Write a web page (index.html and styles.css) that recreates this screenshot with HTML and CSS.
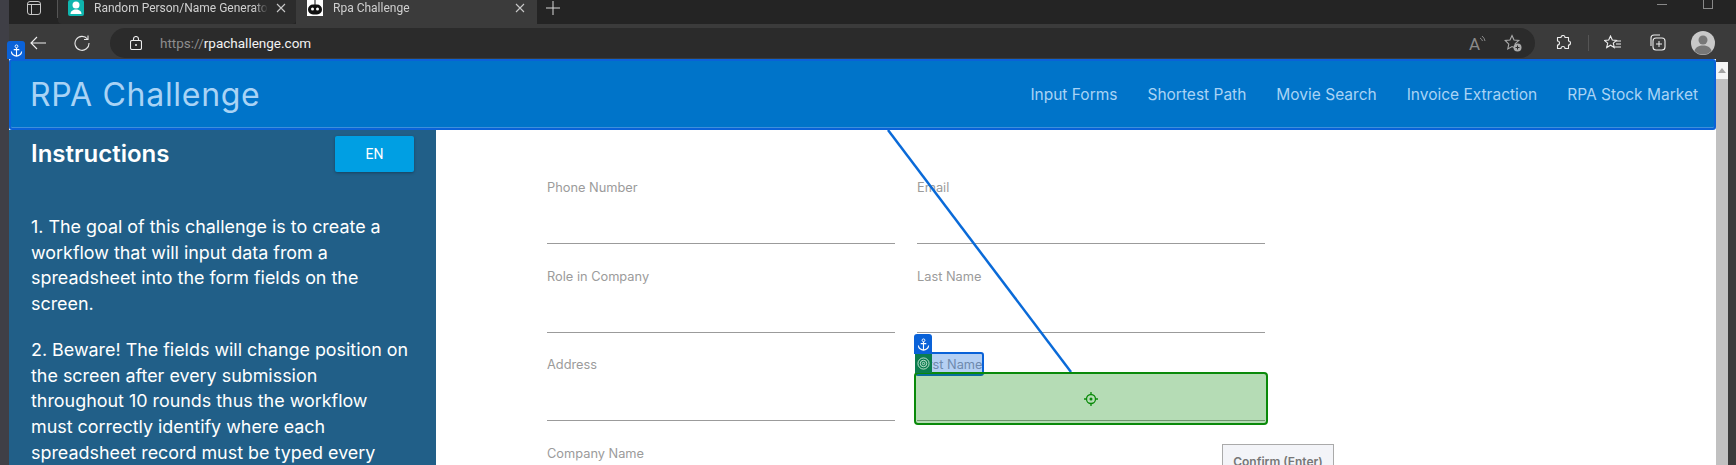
FILE: index.html
```html
<!DOCTYPE html>
<html lang="en">
<head>
  <meta charset="UTF-8" />
  <title>Rpa Challenge</title>
  <link rel="stylesheet" href="styles.css">
</head>
<body>
  <div class="wallpaper"></div>
  <div class="window">
    <div class="tabstrip">
      <svg class="tab-layout" viewBox="0 0 14 14" width="14" height="14"><rect x="0.500" y="0.500" width="13" height="13" rx="2.500" fill="none" stroke="#c8c8c8" stroke-width="1"/><path d="M0.500 3.500h13M4.500 3.500v10" fill="none" stroke="#c8c8c8"/></svg>
      <span class="tab-sep"></span>
      <div class="tab">
        <svg class="favicon" viewBox="0 0 16 16" width="16" height="16"><rect width="16" height="16" rx="2" fill="#0fb5ae"/><circle cx="8" cy="5" r="3.500" fill="#fff"/><path d="M2.500 14c0-3 2.500-4.500 5.500-4.500s5.500 1.500 5.500 4.500z" fill="#fff"/></svg>
        <span class="tab-title">Random Person/Name Generator</span>
        <svg class="tab-close" viewBox="0 0 10 10" width="10" height="10"><path d="M1 1l8 8M9 1l-8 8" stroke="#c8c8c8" stroke-width="1.100"/></svg>
      </div>
      <div class="tab tab-active">
        <svg class="favicon" viewBox="0 0 16 16" width="16" height="16"><rect width="16" height="16" fill="#fff"/><rect x="1" y="4.500" width="14" height="10" rx="5" fill="#111"/><rect x="7.500" y="0" width="1" height="5" fill="#111"/><circle cx="5.500" cy="9" r="1.500" fill="#fff"/><circle cx="10.500" cy="9" r="1.500" fill="#fff"/></svg>
        <span class="tab-title">Rpa Challenge</span>
        <svg class="tab-close" viewBox="0 0 10 10" width="10" height="10"><path d="M1 1l8 8M9 1l-8 8" stroke="#c8c8c8" stroke-width="1.100"/></svg>
      </div>
      <svg class="tab-new" viewBox="0 0 14 14" width="14" height="14"><path d="M7 0v14M0 7h14" stroke="#d8d8d8" stroke-width="1"/></svg>
      <div class="window-btns">
        <span class="win-min"></span>
        <span class="win-max"></span>
      </div>
    </div>

    <div class="toolbar">
      <svg class="tool-back" viewBox="0 0 16 14" width="16" height="14"><path d="M16 7H1M7 1L1 7l6 6" fill="none" stroke="#f0f0f0" stroke-width="1.100"/></svg>
      <svg class="tool-reload" viewBox="0 0 16 16" width="16" height="16"><path d="M13.500 4A7 7 0 1 0 15 8" fill="none" stroke="#e8e8e8" stroke-width="1.100"/><path d="M14 0.500V4.500h-4" fill="none" stroke="#e8e8e8" stroke-width="1.100"/></svg>
      <div class="addressbar">
        <svg class="lock" viewBox="0 0 12 14" width="12" height="14"><rect x="0.500" y="4.500" width="11" height="9" rx="1.500" fill="none" stroke="#eee" stroke-width="1.100"/><path d="M3.500 4.500V3a2.500 2.500 0 0 1 5 0v1.500" fill="none" stroke="#eee" stroke-width="1.100"/><circle cx="6" cy="9" r="1" fill="#eee"/></svg>
        <span class="url"><span class="url-scheme">https://</span>rpachallenge.com</span>
        <div class="address-icons">
          <svg viewBox="0 0 18 16" width="18" height="16"><text x="1" y="15" class="read-a">A</text><path d="M12 3a5 5 0 0 1 2.500 3M14 1a8 8 0 0 1 3 5" fill="none" stroke="#8a8a8a"/></svg>
          <svg viewBox="0 0 18 18" width="18" height="18"><path d="M8 1.500l2 4.500 4.800.5-3.600 3.200 1 4.700L8 12.500l-4.200 2.400 1-4.700L1.200 6.500 6 6z" fill="none" stroke="#aaa" stroke-width="1.100"/><circle cx="13.500" cy="13.500" r="4" fill="#aaa"/><path d="M13.500 11.500v4M11.500 13.500h4" stroke="#2b2b2b"/></svg>
        </div>
      </div>
      <div class="tool-icons">
        <svg class="tool-ext" viewBox="0 0 16 16" width="16" height="16"><path d="M5 2.500a2 2 0 0 1 4 0h3.500V6a2 2 0 0 1 0 4v3.500H9a2 2 0 0 0-4 0H1.500V10a2 2 0 0 0 0-4V2.500z" fill="none" stroke="#eee" stroke-width="1.100" stroke-linejoin="round"/></svg>
        <span class="tool-sep"></span>
        <svg class="tool-fav" viewBox="0 0 18 16" width="18" height="16"><path d="M6.500 1l1.800 4 4.200.4-3.200 2.800 1 4.300-3.800-2.300-3.800 2.300 1-4.300L.5 5.400 4.700 5z" fill="none" stroke="#eee" stroke-width="1.100"/><path d="M12 6h5M12 9h5M11 12h6" stroke="#eee"/></svg>
        <svg class="tool-coll" viewBox="0 0 18 18" width="18" height="18"><path d="M3 12V4a3 3 0 0 1 3-3h6" fill="none" stroke="#eee" stroke-width="1.100"/><rect x="5" y="4" width="12" height="12" rx="3" fill="none" stroke="#eee" stroke-width="1.100"/><path d="M11 7v6M8 10h6" stroke="#eee"/></svg>
        <svg class="tool-user" viewBox="0 0 24 24" width="24" height="24"><circle cx="12" cy="12" r="12" fill="#c8c8c8"/><circle cx="12" cy="9" r="4.500" fill="#777"/><path d="M3.500 20c1-4 4.500-5.500 8.500-5.500s7.500 1.500 8.500 5.500a12 12 0 0 1-17 0z" fill="#777"/></svg>
      </div>
    </div>

    <div class="viewport">
      <div class="page">
        <header class="site-header">
          <div class="brand">RPA Challenge</div>
          <nav class="site-nav">
            <a>Input Forms</a>
            <a>Shortest Path</a>
            <a>Movie Search</a>
            <a>Invoice Extraction</a>
            <a>RPA Stock Market</a>
          </nav>
        </header>
        <div class="content">
          <aside class="sidebar">
            <div class="sidebar-head">
              <h1>Instructions</h1>
              <button class="lang-btn">EN</button>
            </div>
            <p>1. The goal of this challenge is to create a workflow that will input data from a spreadsheet into the form fields on the screen.</p>
            <p>2. Beware! The fields will change position on the screen after every submission throughout 10 rounds thus the workflow must correctly identify where each spreadsheet record must be typed every time.</p>
          </aside>
          <main class="form-area">
            <div class="form-grid">
              <div class="field"><label>Phone Number</label><div class="field-input"></div></div>
              <div class="field"><label>Email</label><div class="field-input"></div></div>
              <div class="field"><label>Role in Company</label><div class="field-input"></div></div>
              <div class="field"><label>Last Name</label><div class="field-input"></div></div>
              <div class="field"><label>Address</label><div class="field-input"></div></div>
              <div class="field"><label>First Name</label><div class="field-input"></div></div>
              <div class="field"><label>Company Name</label><div class="field-input"></div></div>
              <div class="field-submit"><button class="confirm-btn">Confirm (Enter)</button></div>
            </div>
          </main>
        </div>
      </div>
      <div class="scrollbar">
        <span class="scroll-up"></span>
        <span class="scroll-thumb"></span>
      </div>
    </div>
  </div>

  <!-- selector overlay drawn above the page -->
  <svg class="link-line" viewBox="0 0 1736 465" width="1736" height="465"><path d="M888 130L1071 372" stroke="#0a6ad8" stroke-width="2.500" fill="none"/></svg>
  <div class="badge badge-anchor-top">
    <svg viewBox="0 0 14 14" width="13" height="13"><circle cx="7" cy="2.500" r="1.500" fill="none" stroke="#fff"/><path d="M7 4v9M4 6h6M1.500 8c0 3 3 5 5.500 5s5.500-2 5.500-5" fill="none" stroke="#fff" stroke-width="1.200"/></svg>
  </div>
  <div class="match-label"></div>
  <div class="match-box">
    <svg viewBox="0 0 14 14" width="14" height="14"><circle cx="7" cy="7" r="4.500" fill="none" stroke="#0a8a0a" stroke-width="1.300"/><circle cx="7" cy="7" r="1.500" fill="#0a8a0a"/><path d="M7 0v2.500M7 11.500V14M0 7h2.500M11.500 7H14" stroke="#0a8a0a" stroke-width="1.300"/></svg>
  </div>
  <div class="badge badge-anchor">
    <svg viewBox="0 0 14 14" width="13" height="13"><circle cx="7" cy="2.500" r="1.500" fill="none" stroke="#fff"/><path d="M7 4v9M4 6h6M1.500 8c0 3 3 5 5.500 5s5.500-2 5.500-5" fill="none" stroke="#fff" stroke-width="1.200"/></svg>
  </div>
  <div class="badge badge-target">
    <svg viewBox="0 0 14 14" width="13" height="13"><circle cx="7" cy="7" r="6" fill="none" stroke="#cde8d8"/><circle cx="7" cy="7" r="3.500" fill="none" stroke="#cde8d8"/><circle cx="7" cy="7" r="1.300" fill="none" stroke="#cde8d8"/></svg>
  </div>
</body>
</html>
```

FILE: styles.css
```css
html, body {
  margin: 0;
  height: 465px;
  overflow: hidden;
}

body {
  font-family: 'Inter', 'Liberation Sans', sans-serif;
  background-color: #3b3b3b;
  display: flex;
  position: relative;
}

.wallpaper {
  width: 9px;
  flex: none;
  background-color: #3f3f46;
}

.window {
  flex: 1;
  min-width: 0;
  display: flex;
  flex-direction: column;
}

/* browser chrome */
.tabstrip {
  height: 24px;
  flex: none;
  display: flex;
  align-items: flex-start;
  background-color: #242424;
  font-family: 'Roboto', 'Liberation Sans', sans-serif;
  font-size: 12px;
  line-height: 16px;
  color: #d0d0d0;
  padding-left: 18px;
}

.tab-layout {
  margin-top: 1px;
  margin-right: 16px;
}

.tab-sep {
  width: 1px;
  height: 18px;
  background-color: #555;
}

.tab {
  width: 238px;
  height: 24px;
  box-sizing: border-box;
  display: flex;
  align-items: flex-start;
  padding: 0 10px 0 10px;
  background-color: #2c2c2c;
  border-radius: 0 0 4px 4px;
}

.tab-active {
  width: 241px;
  height: 24px;
  padding: 0 12px 0 11px;
  background-color: #3b3b3b;
  border-radius: 0;
}

.favicon {
  flex: none;
  margin-right: 10px;
}

.tab-title {
  flex: 1;
  white-space: nowrap;
  overflow: hidden;
  -webkit-mask-image: linear-gradient(to left, transparent 0, #000 14px);
  mask-image: linear-gradient(to left, transparent 0, #000 14px);
}

.tab-close {
  flex: none;
  margin: 3px 0 0 8px;
}

.tab-new {
  margin-left: 9px;
  margin-top: 1px;
}

.window-btns {
  margin-left: auto;
  display: flex;
  align-items: flex-start;
  height: 24px;
}

.win-min {
  width: 10px;
  height: 1px;
  background-color: #888;
  margin-top: 4px;
  margin-right: 36px;
}

.win-max {
  width: 8px;
  height: 8px;
  border: 1px solid #888;
  border-top: 0;
  margin-right: 23px;
}

.toolbar {
  height: 35px;
  flex: none;
  display: flex;
  align-items: flex-start;
  background-color: #3b3b3b;
  padding-top: 4px;
  box-sizing: border-box;
}

.tool-back {
  margin: 8px 0 0 21px;
}

.tool-reload {
  margin: 7px 0 0 28px;
}

.addressbar {
  width: 1425px;
  height: 30px;
  margin-left: 20px;
  background-color: #2b2b2b;
  border-radius: 15px;
  display: flex;
  align-items: center;
  padding-left: 20px;
  box-sizing: border-box;
  font-family: 'Roboto', 'Liberation Sans', sans-serif;
  font-size: 13.500px;
  color: #f2f2f2;
}

.lock {
  margin-right: 18px;
}

.url-scheme {
  color: #8e8e8e;
}

.address-icons {
  margin-left: auto;
  margin-right: 13px;
  display: flex;
  align-items: center;
  gap: 18px;
}

.read-a {
  font-family: 'Roboto', sans-serif;
  font-size: 17px;
  fill: #8a8a8a;
}

.tool-icons {
  display: flex;
  align-items: center;
  height: 30px;
}

.tool-ext {
  margin-left: 21px;
}

.tool-sep {
  width: 1px;
  height: 16px;
  background-color: #555;
  margin-left: 16px;
}

.tool-fav {
  margin-left: 15px;
}

.tool-coll {
  margin-left: 26px;
}

.tool-user {
  margin-left: 25px;
}

/* page viewport */
.viewport {
  flex: 1;
  min-height: 0;
  display: flex;
}

.page {
  width: 1707px;
  flex: none;
  display: flex;
  flex-direction: column;
  background-color: #fff;
}

.scrollbar {
  width: 12px;
  flex: none;
  background-color: #f5f5f5;
  margin-top: 3px;
  display: flex;
  flex-direction: column;
  align-items: center;
}

.scroll-up {
  width: 0;
  height: 0;
  margin: 6px 0;
  border-left: 4px solid transparent;
  border-right: 4px solid transparent;
  border-bottom: 5px solid #a3a3a3;
}

.scroll-thumb {
  width: 100%;
  flex: 1;
  background-color: #c1c1c1;
}

.site-header {
  height: 71px;
  flex: none;
  box-sizing: border-box;
  display: flex;
  align-items: center;
  justify-content: space-between;
  background-color: #0074c9;
  border: 2px solid #0a62d8;
  border-radius: 3px;
  box-shadow: inset 0 -1px 0 #3d8fdc;
  padding: 0 16px 0 19px;
  color: #a9d3f5;
}

.brand {
  font-size: 32px;
  letter-spacing: 0.700px;
}

.site-nav {
  display: flex;
  gap: 30px;
  font-size: 15.500px;
}

.content {
  flex: 1;
  min-height: 0;
  display: flex;
  overflow: hidden;
}

.sidebar {
  width: 427px;
  flex: none;
  box-sizing: border-box;
  background-color: #215f88;
  color: #fff;
  padding: 6px 22px 0 22px;
  font-size: 17.900px;
  line-height: 25.700px;
}

.sidebar-head {
  display: flex;
  align-items: center;
  justify-content: space-between;
  height: 36px;
  margin-bottom: 42px;
}

.sidebar-head h1 {
  margin: 0;
  font-size: 24px;
  font-weight: 600;
}

.lang-btn {
  width: 79px;
  height: 36px;
  border: none;
  border-radius: 2px;
  background-color: #009fe3;
  color: #fff;
  font-family: 'Roboto', sans-serif;
  font-size: 14px;
  font-weight: 400;
  box-shadow: 0 1px 3px rgba(0,0,0,0.3);
}

.sidebar p {
  margin: 0 0 20px 0;
  max-width: 378px;
}

.form-area {
  flex: 1;
  padding: 48px 0 0 111px;
}

.form-grid {
  display: grid;
  grid-template-columns: 348px 348px;
  grid-auto-rows: 88.670px;
  column-gap: 22px;
}

.field label {
  display: block;
  height: 20px;
  line-height: 20px;
  font-size: 12.800px;
  color: #9b9b9b;
}

.field-input {
  height: 46px;
  box-sizing: border-box;
  border-bottom: 1px solid #9b9b9b;
}

.field-submit {
  padding-left: 305px;
  white-space: nowrap;
}

.confirm-btn {
  width: 112px;
  height: 36px;
  box-sizing: border-box;
  background-color: #f3f4f8;
  border: 1px solid #aaa;
  font-family: 'Inter', sans-serif;
  font-size: 12px;
  font-weight: 600;
  color: #777;
}

/* selector overlay */
.link-line {
  position: absolute;
  left: 0;
  top: 0;
  pointer-events: none;
}

.badge {
  position: absolute;
  display: flex;
  align-items: center;
  justify-content: center;
}

.badge-anchor-top {
  left: 7px;
  top: 41px;
  width: 18px;
  height: 18px;
  background-color: #0a62d8;
  border-radius: 3px 3px 0 0;
}

.badge-anchor {
  left: 914px;
  top: 334px;
  width: 18px;
  height: 20px;
  background-color: #0a62d8;
  border-radius: 3px 3px 0 0;
}

.badge-target {
  left: 915px;
  top: 354px;
  width: 17px;
  height: 19px;
  background-color: #0b7d4e;
}

.match-label {
  position: absolute;
  left: 915px;
  top: 352px;
  width: 69px;
  height: 24px;
  box-sizing: border-box;
  background-color: rgba(10, 98, 216, 0.3);
  border: 2px solid #0a62d8;
  border-radius: 3px;
}

.match-box {
  position: absolute;
  left: 914px;
  top: 372px;
  width: 354px;
  height: 53px;
  box-sizing: border-box;
  background-color: rgba(10, 138, 10, 0.3);
  border: 2px solid #0a8a0a;
  border-radius: 4px;
  display: flex;
  align-items: center;
  justify-content: center;
}
```
